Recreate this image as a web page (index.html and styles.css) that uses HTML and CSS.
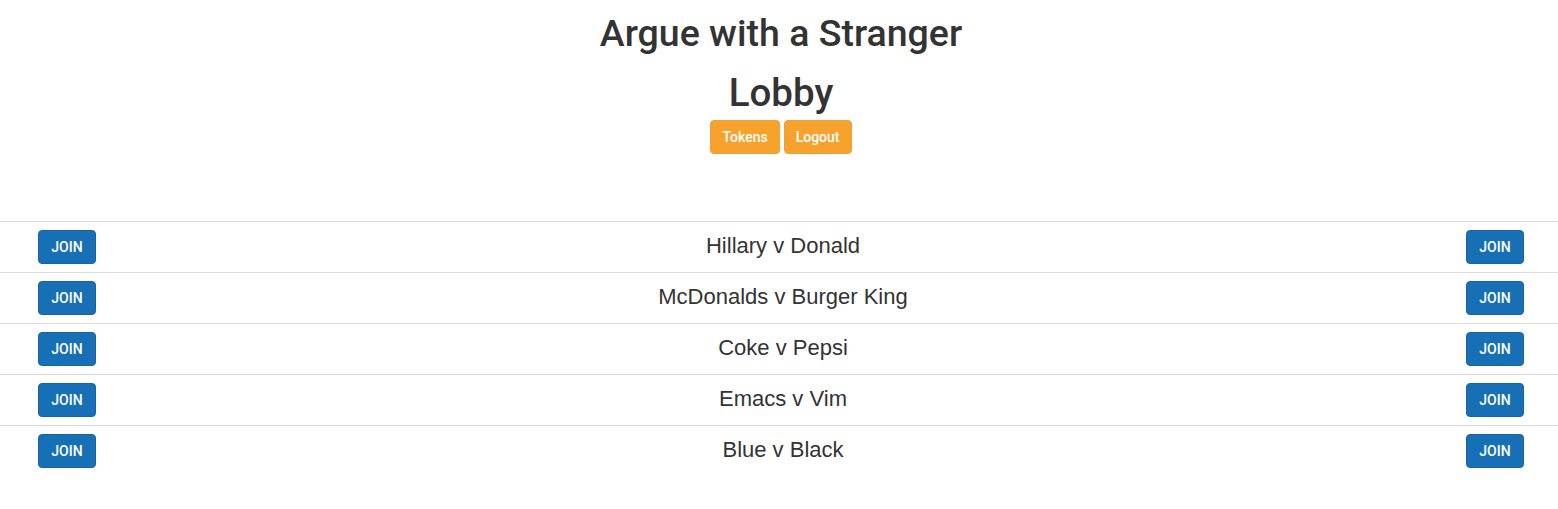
FILE: index.html
```html
<!DOCTYPE html>
<html>
<head>
<meta charset="utf-8">
<title>Argue with a Stranger</title>
<link rel="stylesheet" href="styles.css">
</head>
<body>
<header class="header">
  <h1 class="title">Argue with a Stranger</h1>
  <h1 class="subtitle">Lobby</h1>
  <div class="actions">
    <button class="btn btn-warning">Tokens</button>
    <button class="btn btn-warning">Logout</button>
  </div>
</header>
<div class="lobby">
  <div class="row"><button class="btn btn-primary">JOIN</button><span class="topic">Hillary v Donald</span><button class="btn btn-primary">JOIN</button></div>
  <div class="row"><button class="btn btn-primary">JOIN</button><span class="topic">McDonalds v Burger King</span><button class="btn btn-primary">JOIN</button></div>
  <div class="row"><button class="btn btn-primary">JOIN</button><span class="topic">Coke v Pepsi</span><button class="btn btn-primary">JOIN</button></div>
  <div class="row"><button class="btn btn-primary">JOIN</button><span class="topic">Emacs v Vim</span><button class="btn btn-primary">JOIN</button></div>
  <div class="row"><button class="btn btn-primary">JOIN</button><span class="topic">Blue v Black</span><button class="btn btn-primary">JOIN</button></div>
</div>
</body>
</html>
```
FILE: styles.css
```css
* { box-sizing: border-box; }
body {
  margin: 0;
  font-family: "Liberation Sans", Arial, sans-serif;
  font-size: 14px;
  color: #333;
  background: #fff;
}
.header {
  text-align: center;
  padding-left: 4px;
  padding-top: 13px;
}
.title, .subtitle {
  font-family: Roboto, "Liberation Sans", Arial, sans-serif;
  font-size: 37.5px;
  font-weight: 500;
  line-height: 40px;
  margin: 0;
}
.subtitle {
  font-size: 38.5px;
  margin-top: 20px;
}
.actions {
  margin-top: 7px;
  display: flex;
  justify-content: center;
  gap: 4px;
}
.btn {
  font-family: Roboto, "Liberation Sans", Arial, sans-serif;
  font-size: 14px;
  font-weight: 500;
  line-height: 20px;
  height: 34px;
  padding: 6px 12px;
  border-radius: 4px;
  border: 1px solid transparent;
  color: #fff;
  cursor: pointer;
}
.btn-warning {
  background: #f7a22d;
  border-color: #eea036;
  padding: 6px 11px;
}
.btn-primary {
  background: #1770b5;
  border-color: #1565a5;
  width: 58px;
  padding: 6px 0;
  text-align: center;
}
.lobby {
  margin-top: 67px;
}
.row {
  display: flex;
  align-items: center;
  border-top: 1px solid #ddd;
  padding: 8px 34px 8px 38px;
}
.topic {
  flex: 1;
  text-align: center;
  font-size: 22px;
  line-height: 24px;
  padding-left: 4px;
  margin-top: -3px;
}
```
